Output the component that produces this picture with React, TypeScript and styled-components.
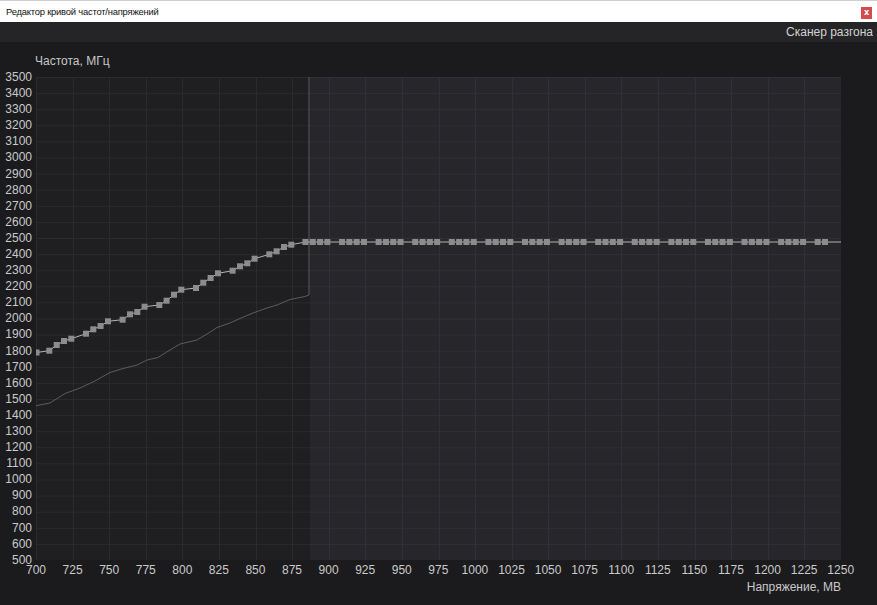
import React from "react";
import styled, { createGlobalStyle } from "styled-components";

const Global = createGlobalStyle`
  html, body { margin: 0; padding: 0; background: #1b1b1d; }
  #root { width: 877px; height: 605px; overflow: hidden; }
`;

const PLOT_W = 805;
const PLOT_H = 483;
const X_STEP = PLOT_W / 22; // 25 mV
const Y_STEP = PLOT_H / 30; // 100 MHz
const SPLIT = 273.7; // 887 mV

const Window = styled.div`
  width: 877px;
  height: 605px;
  display: flex;
  flex-direction: column;
  background: #1b1b1d;
  font-family: "Liberation Sans", Arial, sans-serif;
`;

const TitleBar = styled.div`
  height: 21px;
  border-top: 1px solid #cfcfcf;
  background: #ffffff;
  display: flex;
  align-items: flex-start;
  justify-content: space-between;
  padding: 0 5px 0 6px;
`;

const TitleText = styled.span`
  font-family: "Liberation Sans", Arial, sans-serif;
  font-size: 9.4px;
  letter-spacing: -0.2px;
  line-height: 21px;
  color: #111;
`;

const CloseButton = styled.div`
  margin-top: 6px;
  width: 11px;
  height: 12px;
  background: #d44d4d;
  color: #fff;
  font-family: "DejaVu Sans", sans-serif;
  font-size: 8px;
  font-weight: bold;
  line-height: 11px;
  text-align: center;
`;

const Toolbar = styled.div`
  height: 20px;
  background: #252528;
  display: flex;
  justify-content: flex-end;
  align-items: center;
  padding-right: 4px;
`;

const ToolbarLink = styled.span`
  font-size: 12px;
  color: #d2d2d2;
  line-height: 20px;
`;

const ChartSection = styled.div`
  flex: 1;
  display: flex;
  flex-direction: column;
`;

const AxisTitle = styled.div`
  height: 35px;
  box-sizing: border-box;
  padding: 12px 0 0 35px;
  font-size: 12px;
  line-height: 14px;
  color: #c8c8c8;
`;

const PlotRow = styled.div`
  display: flex;
  height: ${PLOT_H}px;
`;

const YAxis = styled.div`
  width: 36px;
  display: flex;
  flex-direction: column;
  margin-top: -${Y_STEP / 2}px;
  height: ${Y_STEP * 31}px;
`;

const YLabel = styled.div`
  height: ${Y_STEP}px;
  line-height: ${Y_STEP}px;
  font-size: 12px;
  color: #cacaca;
  text-align: right;
  padding-right: 4px;
`;

const Plot = styled.svg`
  display: block;
  width: ${PLOT_W}px;
  height: ${PLOT_H}px;
  overflow: visible;
`;

const XAxis = styled.div`
  display: flex;
  height: 20px;
  margin-left: ${36 - X_STEP / 2}px;
`;

const XLabel = styled.div`
  width: ${X_STEP}px;
  flex: none;
  text-align: center;
  font-size: 12px;
  line-height: 20px;
  color: #cacaca;
`;

const XTitleRow = styled.div`
  width: 841px;
  text-align: right;
  font-size: 12px;
  line-height: 14px;
  color: #c8c8c8;
`;

const yLabels = Array.from({ length: 31 }, (_, i) => 3500 - i * 100);
const xLabels = Array.from({ length: 23 }, (_, i) => 700 + i * 25);

// upper curve (absolute page pixels -> plot coords)
const slopeAbs: [number, number][] = [
  [36.5, 352.5],
  [49.3, 350.7], [56.7, 345], [64, 341], [71.3, 338.7],
  [86, 333.7], [93.3, 329.3], [100.6, 326], [108, 321.3],
  [122.6, 319.7], [130, 314.3], [137.3, 312], [144.6, 306.7],
  [159.3, 305], [166.6, 300.7], [174, 294.7], [181.3, 289.7],
  [196, 288], [203.3, 282.7], [210.6, 278], [218, 273.3],
  [232.6, 270.7], [240, 266.3], [247.3, 263.3], [254.6, 258.7],
  [269.3, 254.3], [276.6, 251.3], [284, 247], [291.3, 244.7],
];
const flatAbs: [number, number][] = [];
for (let k = 7; k <= 21; k++) {
  const n = k === 21 ? 2 : 4;
  for (let j = 0; j < n; j++) {
    flatAbs.push([49.3 + k * X_STEP + j * 7.32, 242]);
  }
}
const upper = [...slopeAbs, ...flatAbs].map(([x, y]) => [x - 36, y - 77] as [number, number]);

const lowerAbs: [number, number][] = [
  [36, 405.7], [50, 403], [65, 393.5], [80, 388], [95, 381], [110, 372.5],
  [123, 368.5], [137, 365], [147, 360], [158, 357.5], [170, 350], [180, 344],
  [197, 340], [207, 334], [217, 327.5], [230, 323], [240, 318.5], [253, 313],
  [267, 308], [277, 305], [290, 299.5], [305, 296.5], [309, 295], [309, 77],
];
const lower = lowerAbs.map(([x, y]) => [x - 36, y - 77] as [number, number]);

const toPath = (pts: [number, number][]) =>
  pts.map(([x, y], i) => `${i ? "L" : "M"}${x.toFixed(1)} ${y.toFixed(1)}`).join(" ");

function Chart() {
  const vLines = Array.from({ length: 23 }, (_, i) => i * X_STEP);
  const hLines = Array.from({ length: 31 }, (_, i) => i * Y_STEP);
  return (
    <Plot viewBox={`0 0 ${PLOT_W} ${PLOT_H}`}>
      <defs>
        <clipPath id="plotClip">
          <rect x="0" y="0" width={PLOT_W} height={PLOT_H} />
        </clipPath>
      </defs>
      <rect x="0" y="0" width={SPLIT} height={PLOT_H} fill="#1f1f21" />
      <rect x={SPLIT} y="0" width={PLOT_W - SPLIT} height={PLOT_H} fill="#26262b" />
      <g clipPath="url(#plotClip)">
        {hLines.map((y) => (
          <React.Fragment key={`h${y}`}>
            <line x1="0" x2={SPLIT} y1={y + 0.5} y2={y + 0.5} stroke="#2b2b2e" strokeWidth="1" />
            <line x1={SPLIT} x2={PLOT_W} y1={y + 0.5} y2={y + 0.5} stroke="#303036" strokeWidth="1" />
          </React.Fragment>
        ))}
        {vLines.map((x) => (
          <line
            key={`v${x}`}
            x1={Math.round(x) + 0.5}
            x2={Math.round(x) + 0.5}
            y1="0"
            y2={PLOT_H}
            stroke={x < SPLIT ? "#2b2b2e" : "#303036"}
            strokeWidth="1"
          />
        ))}
        <path d={toPath(lower)} fill="none" stroke="#5c5c5f" strokeWidth="1" />
        <path
          d={`${toPath(upper)} L${PLOT_W} 165`}
          fill="none"
          stroke="#b4b4b4"
          strokeWidth="1"
        />
        {upper.map(([x, y], i) => (
          <rect key={i} x={x - 3} y={y - 3} width="6" height="6" fill="#8c8c8c" />
        ))}
      </g>
    </Plot>
  );
}

export default function App() {
  return (
    <>
      <Global />
      <Window>
        <TitleBar>
          <TitleText>Редактор кривой частот/напряжений</TitleText>
          <CloseButton>x</CloseButton>
        </TitleBar>
        <Toolbar>
          <ToolbarLink>Сканер разгона</ToolbarLink>
        </Toolbar>
        <ChartSection>
          <AxisTitle>Частота, МГц</AxisTitle>
          <PlotRow>
            <YAxis>
              {yLabels.map((v) => (
                <YLabel key={v}>{v}</YLabel>
              ))}
            </YAxis>
            <Chart />
          </PlotRow>
          <XAxis>
            {xLabels.map((v) => (
              <XLabel key={v}>{v}</XLabel>
            ))}
          </XAxis>
          <XTitleRow>Напряжение, МВ</XTitleRow>
        </ChartSection>
      </Window>
    </>
  );
}
